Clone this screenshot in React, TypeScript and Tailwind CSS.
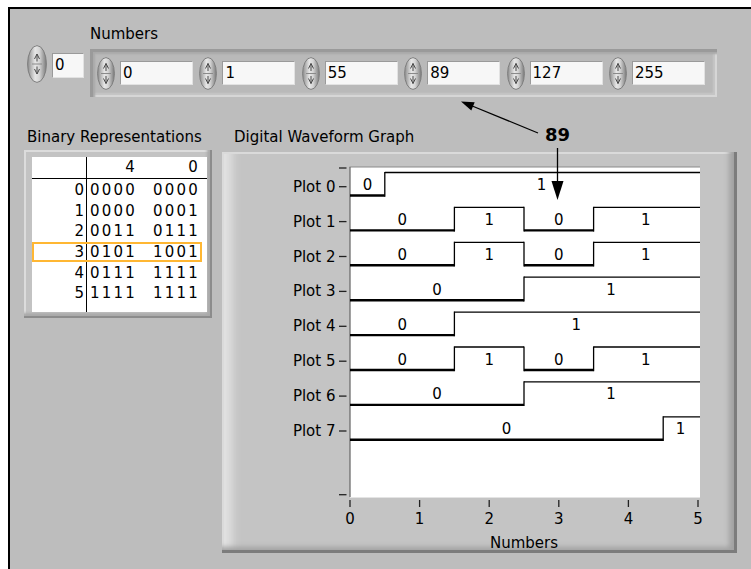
import React from "react";

const FONT = "'DejaVu Sans', Verdana, sans-serif";
const NUMS = [0, 1, 55, 89, 127, 255];

function Spinner({ w, h }: { w: number; h: number }) {
  const cx = w / 2;
  const cy = h / 2;
  const gid = `spin-${w}-${h}`;
  return (
    <svg width={w} height={h} viewBox={`0 0 ${w} ${h}`} className="block shrink-0">
      <defs>
        <linearGradient id={gid} x1="0" y1="0" x2="1" y2="0">
          <stop offset="0" stopColor="#8c8c8c" />
          <stop offset="0.4" stopColor="#e6e6e6" />
          <stop offset="0.62" stopColor="#d6d6d6" />
          <stop offset="1" stopColor="#7a7a7a" />
        </linearGradient>
      </defs>
      <ellipse cx={cx} cy={cy} rx={cx - 0.6} ry={cy - 0.6} fill={`url(#${gid})`} stroke="#7e7e7e" strokeWidth={1} />
      <line x1={cx - 5} y1={cy} x2={cx + 5} y2={cy} stroke="#8a8a8a" strokeWidth={1} />
      <path d={`M${cx - 2.5} ${cy - 5} L${cx} ${cy - 10} L${cx + 2.5} ${cy - 5}`} fill="none" stroke="#4a4a4a" strokeWidth={1} />
      <line x1={cx} y1={cy - 10} x2={cx} y2={cy - 2.5} stroke="#4a4a4a" strokeWidth={1} />
      <path d={`M${cx - 2.5} ${cy + 5} L${cx} ${cy + 10} L${cx + 2.5} ${cy + 5}`} fill="none" stroke="#4a4a4a" strokeWidth={1} />
      <line x1={cx} y1={cy + 2.5} x2={cx} y2={cy + 10} stroke="#4a4a4a" strokeWidth={1} />
    </svg>
  );
}

function NumBox({ value, className }: { value: string; className: string }) {
  return (
    <div
      className={`bg-[#f7f7f7] border border-[#9a9a9a] border-r-[#e2e2e2] border-b-[#e2e2e2] pl-[2px] text-[15px] leading-[22px] text-black ${className}`}
    >
      {value}
    </div>
  );
}

function Digits({ s }: { s: string }) {
  return (
    <div className="flex">
      {s.split("").map((c, i) => (
        <span key={i} className="inline-block w-[11.75px] text-center">
          {c}
        </span>
      ))}
    </div>
  );
}

function BinaryTable() {
  const rows = NUMS.map((n) => n.toString(2).padStart(8, "0"));
  return (
    <div className="relative w-[175px] h-[155px] bg-white flex text-[15px] text-black">
      <div className="w-[55px] h-full border-r border-black">
        <div className="h-[22px] border-b border-black" />
        <div className="pt-[1px]">
          {rows.map((_, i) => (
            <div key={i} className="h-[20.7px] leading-[20.7px] text-right pr-[2px]">
              {i}
            </div>
          ))}
        </div>
      </div>
      <div className="flex-1 h-full">
        <div className="h-[22px] border-b border-black leading-[21px] flex pl-[2px]">
          <Digits s="   4" />
          <div className="w-[16px]" />
          <Digits s="   0" />
        </div>
        <div className="pt-[1px]">
          {rows.map((r, i) => (
            <div key={i} className="h-[20.7px] leading-[20.7px] flex pl-[2px]">
              <Digits s={r.slice(0, 4)} />
              <div className="w-[16px]" />
              <Digits s={r.slice(4)} />
            </div>
          ))}
        </div>
      </div>
      <div className="absolute left-0 top-[85px] w-[170px] h-[20px] border-2 border-[#ffb733]" />
    </div>
  );
}

function Graph() {
  const X = (v: number) => 128 + 69.6 * v;
  const hi = (k: number) => 20.5 + 34.9 * k;
  const lo = (k: number) => hi(k) + 23;
  const items: React.ReactNode[] = [];
  for (let k = 0; k < 8; k++) {
    const bits = NUMS.map((n) => (n >> k) & 1);
    const runs: { v: number; a: number; b: number }[] = [];
    bits.forEach((v, i) => {
      const last = runs[runs.length - 1];
      if (last && last.v === v) last.b = i;
      else runs.push({ v, a: i, b: i });
    });
    runs.forEach((r, ri) => {
      const s = r.a === 0 ? 0 : r.a - 0.5;
      const e = r.b === 5 ? 5 : r.b + 0.5;
      const x1 = X(s);
      const x2 = r.b === 5 ? 478 : X(e);
      const y = r.v ? hi(k) : lo(k);
      items.push(
        <line key={`h${k}-${ri}`} x1={x1} y1={y} x2={x2} y2={y} stroke="#000" strokeWidth={r.v ? 1.3 : 2.4} />
      );
      items.push(
        <text
          key={`t${k}-${ri}`}
          x={X((s + e) / 2)}
          y={hi(k) + 12.5}
          textAnchor="middle"
          dominantBaseline="central"
          fontSize={15}
          fontFamily={FONT}
          fill="#000"
        >
          {r.v}
        </text>
      );
      if (ri < runs.length - 1) {
        items.push(
          <line key={`v${k}-${ri}`} x1={x2} y1={hi(k) - 0.6} x2={x2} y2={lo(k) + 1.2} stroke="#000" strokeWidth={1.3} />
        );
      }
    });
  }
  const yTicks = [16, ...Array.from({ length: 8 }, (_, k) => hi(k) + 14.2), 342.7];
  return (
    <svg width={515} height={401} viewBox="0 0 515 401" className="block">
      <rect x={128} y={15} width={350} height={330} fill="#fff" />
      <line x1={127.5} y1={15} x2={478} y2={15} stroke="#8a8a8a" strokeWidth={1} />
      <line x1={128} y1={15} x2={128} y2={345} stroke="#6e6e6e" strokeWidth={1.3} />
      <line x1={128} y1={345.5} x2={478} y2={345.5} stroke="#e4e4e4" strokeWidth={1} />
      {yTicks.map((y, i) => (
        <line key={`yt${i}`} x1={117} y1={y} x2={124.5} y2={y} stroke="#222" strokeWidth={1.3} />
      ))}
      {Array.from({ length: 8 }, (_, k) => (
        <text
          key={`pl${k}`}
          x={113.5}
          y={hi(k) + 14.2}
          textAnchor="end"
          dominantBaseline="central"
          fontSize={15}
          fontFamily={FONT}
          fill="#000"
        >
          {`Plot ${k}`}
        </text>
      ))}
      {Array.from({ length: 6 }, (_, i) => (
        <g key={`xt${i}`}>
          <line x1={X(i)} y1={348} x2={X(i)} y2={355} stroke="#222" strokeWidth={1.3} />
          <text
            x={X(i)}
            y={367}
            textAnchor="middle"
            dominantBaseline="central"
            fontSize={15}
            fontFamily={FONT}
            fill="#000"
          >
            {i}
          </text>
        </g>
      ))}
      <text x={302} y={391} textAnchor="middle" dominantBaseline="central" fontSize={15} fontFamily={FONT} fill="#000">
        Numbers
      </text>
      {items}
    </svg>
  );
}

function Overlay() {
  return (
    <svg width={751} height={569} viewBox="0 0 751 569" className="absolute left-0 top-0 pointer-events-none">
      <line x1={538} y1={133} x2={471} y2={105.5} stroke="#000" strokeWidth={1.2} />
      <polygon points="461,101.5 471.3,110.6 474.7,102.2" fill="#000" />
      <line x1={557.5} y1={148} x2={557.5} y2={184} stroke="#000" strokeWidth={1.3} />
      <polygon points="551.5,181 563.5,181 557.5,200" fill="#000" />
      <text
        x={557.5}
        y={134}
        textAnchor="middle"
        dominantBaseline="central"
        fontSize={18}
        fontWeight="bold"
        fontFamily={FONT}
        fill="#000"
      >
        89
      </text>
    </svg>
  );
}

export default function App() {
  return (
    <div className="relative w-[751px] h-[569px] bg-white overflow-hidden pt-[7px] pl-[8px]" style={{ fontFamily: FONT }}>
      <div className="w-[743px] h-[562px] border-l-2 border-t-2 border-black bg-[#bdbdbd] text-black">
        {/* top row */}
        <div className="flex items-start pt-[16px] pl-[17px]">
          <div className="mt-[20px] flex items-start gap-[5px]">
            <Spinner w={20} h={38} />
            <NumBox value="0" className="mt-[8px] w-[32px] h-[25px]" />
          </div>
          <div className="ml-[6px]">
            <div className="h-[18px] leading-[18px] text-[15px]">Numbers</div>
            <div className="mt-[6px] w-[627px] h-[48px] bg-[#b9b9b9] flex items-center pl-[7px] gap-[6.4px] shadow-[inset_3px_3px_0_#9a9a9a,inset_5px_5px_2px_#a9a9a9,inset_-2px_-2px_0_#d6d6d6,inset_-4px_-4px_2px_#c6c6c6]">
              {NUMS.map((n, i) => (
                <div key={i} className="flex items-center gap-[5px]">
                  <Spinner w={18} h={33} />
                  <NumBox value={String(n)} className="w-[73px] h-[24px]" />
                </div>
              ))}
            </div>
          </div>
        </div>
        {/* second row */}
        <div className="flex items-start mt-[31px] pl-[14px] gap-[10px]">
          <div>
            <div className="h-[18px] leading-[18px] text-[15px] pl-[3px]">Binary Representations</div>
            <div className="mt-[4px] w-[188px] h-[168px] bg-[#c3c3c3] pl-[8px] pt-[7px] shadow-[inset_-2px_-2px_0_#8c8c8c,inset_-5px_-5px_3px_#a9a9a9,inset_2px_2px_0_#dcdcdc]">
              <BinaryTable />
            </div>
          </div>
          <div>
            <div className="h-[18px] leading-[18px] text-[15px] pl-[12px]">Digital Waveform Graph</div>
            <div className="mt-[6px] w-[515px] h-[401px] bg-[#c4c4c4] shadow-[inset_-3px_-3px_0_#7c7c7c,inset_-8px_-6px_5px_#a2a2a2,inset_2px_2px_0_#dadada,inset_18px_0_10px_-8px_#e2e2e2]">
              <Graph />
            </div>
          </div>
        </div>
      </div>
      <Overlay />
    </div>
  );
}
